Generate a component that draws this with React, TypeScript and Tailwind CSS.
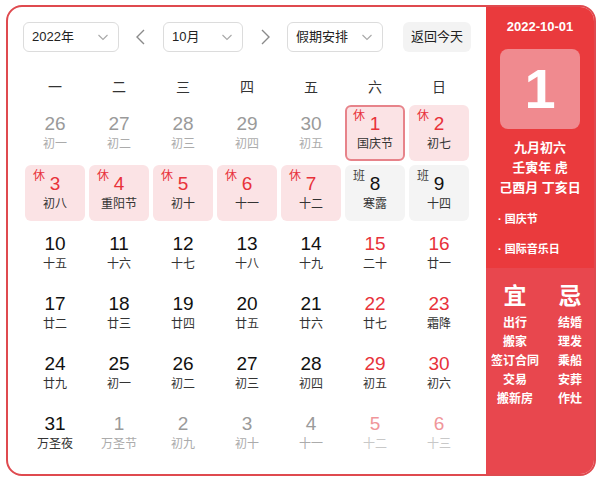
import React from "react";

type Day = {
  n: number;
  l: string;
  muted?: boolean; // other month
  red?: boolean;
  tag?: "休" | "班";
  selected?: boolean;
};

const rows: Day[][] = [
  [
    { n: 26, l: "初一", muted: true },
    { n: 27, l: "初二", muted: true },
    { n: 28, l: "初三", muted: true },
    { n: 29, l: "初四", muted: true },
    { n: 30, l: "初五", muted: true },
    { n: 1, l: "国庆节", red: true, tag: "休", selected: true },
    { n: 2, l: "初七", red: true, tag: "休" },
  ],
  [
    { n: 3, l: "初八", red: true, tag: "休" },
    { n: 4, l: "重阳节", red: true, tag: "休" },
    { n: 5, l: "初十", red: true, tag: "休" },
    { n: 6, l: "十一", red: true, tag: "休" },
    { n: 7, l: "十二", red: true, tag: "休" },
    { n: 8, l: "寒露", tag: "班" },
    { n: 9, l: "十四", tag: "班" },
  ],
  [
    { n: 10, l: "十五" },
    { n: 11, l: "十六" },
    { n: 12, l: "十七" },
    { n: 13, l: "十八" },
    { n: 14, l: "十九" },
    { n: 15, l: "二十", red: true },
    { n: 16, l: "廿一", red: true },
  ],
  [
    { n: 17, l: "廿二" },
    { n: 18, l: "廿三" },
    { n: 19, l: "廿四" },
    { n: 20, l: "廿五" },
    { n: 21, l: "廿六" },
    { n: 22, l: "廿七", red: true },
    { n: 23, l: "霜降", red: true },
  ],
  [
    { n: 24, l: "廿九" },
    { n: 25, l: "初一" },
    { n: 26, l: "初二" },
    { n: 27, l: "初三" },
    { n: 28, l: "初四" },
    { n: 29, l: "初五", red: true },
    { n: 30, l: "初六", red: true },
  ],
  [
    { n: 31, l: "万圣夜" },
    { n: 1, l: "万圣节", muted: true },
    { n: 2, l: "初九", muted: true },
    { n: 3, l: "初十", muted: true },
    { n: 4, l: "十一", muted: true },
    { n: 5, l: "十二", muted: true, red: true },
    { n: 6, l: "十三", muted: true, red: true },
  ],
];

const weekdays = ["一", "二", "三", "四", "五", "六", "日"];
const yi = ["出行", "搬家", "签订合同", "交易", "搬新房"];
const ji = ["结婚", "理发", "乘船", "安葬", "作灶"];

const Chevron = () => (
  <svg width="14" height="14" viewBox="0 0 14 14" fill="none" stroke="#a8a8a8" strokeWidth="1.1">
    <path d="M2.5 5 L7 9.5 L11.5 5" />
  </svg>
);

function Select({ label, width }: { label: string; width: string }) {
  return (
    <div
      className={`${width} h-[30px] border border-[#dcdcdc] rounded-[6px] flex items-center justify-between pl-[8px] pr-[8px] text-[13px] text-[#222]`}
    >
      <span>{label}</span>
      <Chevron />
    </div>
  );
}

function Cell({ d }: { d: Day }) {
  let bg = "";
  if (d.tag === "休") bg = "bg-[#fbe3e5]";
  if (d.tag === "班") bg = "bg-[#f4f4f4]";
  const border = d.selected ? "border-2 border-[#e7838a]" : "border-2 border-transparent";

  let numColor = "text-[#111]";
  let lunarColor = "text-[#333]";
  if (d.red) numColor = "text-[#e8323a]";
  if (d.muted) {
    numColor = d.red ? "text-[#f0969a]" : "text-[#9a9a9a]";
    lunarColor = d.red ? "text-[#c8c8c8]" : "text-[#ababab]";
  }

  return (
    <div className={`relative h-[56px] rounded-[6px] ${bg} ${border} flex flex-col items-center pt-[6px]`}>
      {d.tag && (
        <span
          className={`absolute left-[6px] top-[1px] text-[12px] leading-[16px] ${
            d.tag === "休" ? "text-[#e8323a]" : "text-[#444]"
          }`}
        >
          {d.tag}
        </span>
      )}
      <span className={`text-[19px] leading-[22px] ${numColor}`}>{d.n}</span>
      <span className={`text-[12px] leading-[17px] mt-[1px] ${lunarColor}`}>{d.l}</span>
    </div>
  );
}

export default function App() {
  return (
    <div
      className="w-[600px] h-[480px] bg-white pt-[5px] pl-[6px]"
      style={{ fontFamily: '"Liberation Sans", "Noto Sans CJK SC", sans-serif' }}
    >
      <div className="w-[590px] h-[471px] border-2 border-[#df4a4f] rounded-[16px] overflow-hidden flex">
        {/* calendar */}
        <div className="flex-1 px-[15px] pt-[15px]">
          <div className="flex items-center h-[30px]">
            <Select label="2022年" width="w-[96px]" />
            <div className="w-[44px] flex justify-center">
              <svg width="14" height="18" viewBox="0 0 14 18" fill="none" stroke="#8a8a8a" strokeWidth="1.4">
                <path d="M10 2 L3 9 L10 16" />
              </svg>
            </div>
            <Select label="10月" width="w-[80px]" />
            <div className="w-[44px] flex justify-center">
              <svg width="14" height="18" viewBox="0 0 14 18" fill="none" stroke="#8a8a8a" strokeWidth="1.4">
                <path d="M4 2 L11 9 L4 16" />
              </svg>
            </div>
            <Select label="假期安排" width="w-[96px]" />
            <div className="ml-[20px] h-[30px] px-[8px] rounded-[6px] bg-[#f3f3f3] flex items-center text-[13px] text-[#222]">
              返回今天
            </div>
          </div>

          <div className="px-[2px]">
            <div className="grid grid-cols-7 gap-x-[4px] mt-[21px] h-[28px] items-center">
              {weekdays.map((w) => (
                <div key={w} className="text-center text-[14px] text-[#333]">
                  {w}
                </div>
              ))}
            </div>
            <div className="grid grid-cols-7 gap-[4px] mt-[4px]">
              {rows.flat().map((d, i) => (
                <Cell key={i} d={d} />
              ))}
            </div>
          </div>
        </div>

        {/* side panel */}
        <div className="w-[108px] flex flex-col text-white font-bold">
          <div className="bg-[#ea3a3d] h-[261px] flex flex-col items-center pt-[12px]">
            <div className="text-[13px] leading-[16px]">2022-10-01</div>
            <div className="mt-[14px] w-[80px] h-[80px] rounded-[8px] bg-[#f08a8f] flex items-center justify-center text-[56px] leading-none font-bold">
              1
            </div>
            <div className="mt-[9px] text-[13px] leading-[20px] text-center">
              <div>九月初六</div>
              <div>壬寅年 虎</div>
              <div>己酉月 丁亥日</div>
            </div>
            <div className="self-start pl-[12px] mt-[14px] text-[11px] leading-[14px] flex flex-col gap-[16px]">
              <div>· 国庆节</div>
              <div>· 国际音乐日</div>
            </div>
          </div>
          <div className="flex-1 bg-[#e8474e] flex justify-center gap-[10px] pt-[14px]">
            <div className="w-[50px] flex flex-col items-center">
              <div className="text-[23px] leading-[28px]">宜</div>
              <div className="mt-[4px] flex flex-col items-center text-[12px] leading-[19px]">
                {yi.map((s) => (
                  <div key={s} className="whitespace-nowrap">{s}</div>
                ))}
              </div>
            </div>
            <div className="w-[40px] flex flex-col items-center">
              <div className="text-[23px] leading-[28px]">忌</div>
              <div className="mt-[4px] flex flex-col items-center text-[12px] leading-[19px]">
                {ji.map((s) => (
                  <div key={s}>{s}</div>
                ))}
              </div>
            </div>
          </div>
        </div>
      </div>
    </div>
  );
}
